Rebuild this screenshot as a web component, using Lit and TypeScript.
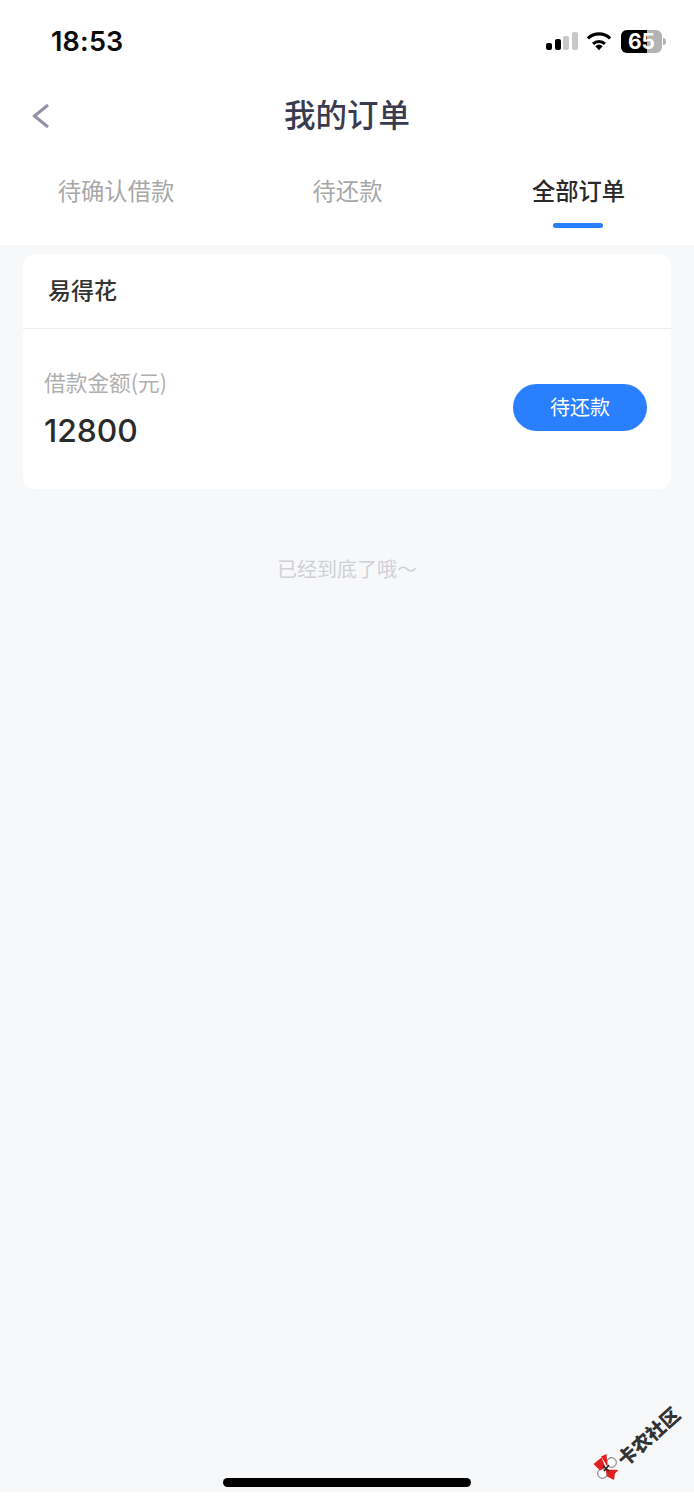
import { LitElement, html, css } from "lit";
import { customElement } from "lit/decorators.js";

@customElement("app-root")
export class AppRoot extends LitElement {
  static styles = css`
    :host {
      display: flex;
      flex-direction: column;
      width: 694px;
      height: 1492px;
      position: relative;
      overflow: hidden;
      background: #f7f8fa;
      font-family: "Noto Sans CJK SC", "Liberation Sans", sans-serif;
    }
    .top { background: #fff; height: 245px; display: flex; flex-direction: column; flex: none; }
    .status {
      height: 82px; display: flex; align-items: center; justify-content: space-between;
      padding: 0 28px 0 51px; flex: none;
    }
    .time { font: 600 27px/1 "Inter", "Liberation Sans", sans-serif; color: #0b0b0b; letter-spacing: 0.2px; }
    .sysicons { display: flex; align-items: center; }
    .signal { margin-right: 8px; }
    .wifi { margin-right: 9px; }
    .battery {
      position: relative; width: 41px; height: 23px; border-radius: 6px; overflow: hidden;
      background: #b4b4b4; font: 700 21px/23px "Inter", "Liberation Sans", sans-serif;
    }
    .fill { position: absolute; left: 0; top: 0; bottom: 0; width: 26px; background: #000; }
    .pct { position: absolute; left: 0; right: 0; top: 0; text-align: center; color: #fff; }
    .batwrap { display: flex; align-items: center; gap: 1px; }
    .cap { width: 3px; height: 7px; border-radius: 0 3px 3px 0; background: #b4b4b4; }
    .nav { height: 70px; box-sizing: border-box; padding-bottom: 6px; display: flex; align-items: center; justify-content: center; position: relative; flex: none; }
    .back { position: absolute; left: 30px; top: 19px; }
    .title { font-size: 31.5px; font-weight: 500; color: #3a3b4e; line-height: 1; }
    .tabs { display: grid; grid-template-columns: 232px 231px 231px; flex: 1; }
    .tab { display: flex; flex-direction: column; align-items: center; position: relative; padding-top: 21px; font-size: 23.3px; line-height: 34px; color: #a8a8a8; }
    .tab.on { color: #2a2a2a; font-weight: 500; }
    .bar { position: absolute; top: 71px; left: 50%; margin-left: -26px; width: 50px; height: 5px; border-radius: 3px; background: #2a7fff; }
    .content { padding: 9px 23px 0; display: flex; flex-direction: column; }
    .card { background: #fff; border-radius: 12px; height: 235px; display: flex; flex-direction: column; }
    .head { height: 75px; flex: none; display: flex; align-items: center; padding: 0 0 4px 25px; box-sizing: border-box; border-bottom: 1px solid #ececec; font-size: 23px; font-weight: 500; color: #333; }
    .body { flex: 1; display: flex; align-items: center; justify-content: space-between; padding: 0 24px 0 21px; }
    .info { margin-top: 2px; }
    .label { font-size: 21.7px; line-height: 30px; color: #b0b0b0; }
    .amount { font: 500 31.8px/44px "Inter", "Liberation Sans", sans-serif; color: #2b2b2b; margin-top: 12px; }
    .btn { width: 134px; height: 47px; margin-bottom: 3px; padding-bottom: 2px; box-sizing: border-box; border-radius: 24px; background: #2a7fff; color: #fff; font-size: 20px; display: flex; align-items: center; justify-content: center; }
    .end { text-align: center; margin-top: 65px; font-size: 20px; line-height: 30px; color: #cfd1d5; }
    .home { position: absolute; left: 223px; top: 1478px; width: 248px; height: 9px; border-radius: 5px; background: #000; }
    .logo { position: absolute; left: 590px; top: 1450px; }
    .marktext { position: absolute; left: 610px; top: 1426px; font-size: 19px; font-weight: 900; line-height: 20px; color: #333; white-space: nowrap; transform: rotate(-42deg); }
  `;

  render() {
    return html`
      <div class="top">
        <div class="status">
          <span class="time">18:53</span>
          <div class="sysicons">
            <svg class="signal" width="32" height="18" viewBox="0 0 32 18">
              <rect x="0" y="11" width="6" height="7" rx="2" fill="#000"/>
              <rect x="9" y="7" width="6" height="11" rx="2" fill="#000"/>
              <rect x="17" y="4" width="6" height="14" rx="2" fill="#c8c8c8"/>
              <rect x="26" y="0" width="6" height="18" rx="2" fill="#c8c8c8"/>
            </svg>
            <svg class="wifi" width="26" height="20" viewBox="0 0 28 21">
              <path d="M14 20.5l-4-4.4a6 6 0 0 1 8 0z" fill="#000"/>
              <path d="M7.6 13.6a9.5 9.5 0 0 1 12.8 0" fill="none" stroke="#000" stroke-width="3.2"/>
              <path d="M2 7.6a17.6 17.6 0 0 1 24 0" fill="none" stroke="#000" stroke-width="3.4"/>
            </svg>
            <div class="batwrap">
              <div class="battery"><div class="fill"></div><div class="pct">65</div></div>
              <div class="cap"></div>
            </div>
          </div>
        </div>
        <div class="nav">
          <svg class="back" width="24" height="30" viewBox="0 0 24 30"><path d="M18 4L4.5 15 18 26" fill="none" stroke="#8f8fa8" stroke-width="3"/></svg>
          <span class="title">我的订单</span>
        </div>
        <div class="tabs">
          <div class="tab">待确认借款</div>
          <div class="tab">待还款</div>
          <div class="tab on">全部订单<span class="bar"></span></div>
        </div>
      </div>
      <div class="content">
        <div class="card">
          <div class="head">易得花</div>
          <div class="body">
            <div class="info">
              <div class="label">借款金额(元)</div>
              <div class="amount">12800</div>
            </div>
            <div class="btn">待还款</div>
          </div>
        </div>
        <div class="end">已经到底了哦～</div>
      </div>
      <div class="home"></div>
      <svg class="logo" width="34" height="36" viewBox="0 0 34 36">
        <circle cx="21.5" cy="12.5" r="4.8" fill="#fff" stroke="#444" stroke-width="0.8"/>
        <circle cx="12.5" cy="23.5" r="4.8" fill="#fff" stroke="#444" stroke-width="0.8"/>
        <path d="M3.5 14L11.5 7.5l4 10-5.5 3z" fill="#e02020"/>
        <path d="M11 6.5l5.5-2.5 1 12.5z" fill="#e02020"/>
        <path d="M15.5 19.5l13 .5-3.5 3.5-1 6.5-7-3.5z" fill="#e02020"/>
        <path d="M13 16l6 5M19 15l-5 6" stroke="#222" stroke-width="1.4" fill="none"/>
      </svg>
      <span class="marktext">卡农社区</span>
    `;
  }
}
